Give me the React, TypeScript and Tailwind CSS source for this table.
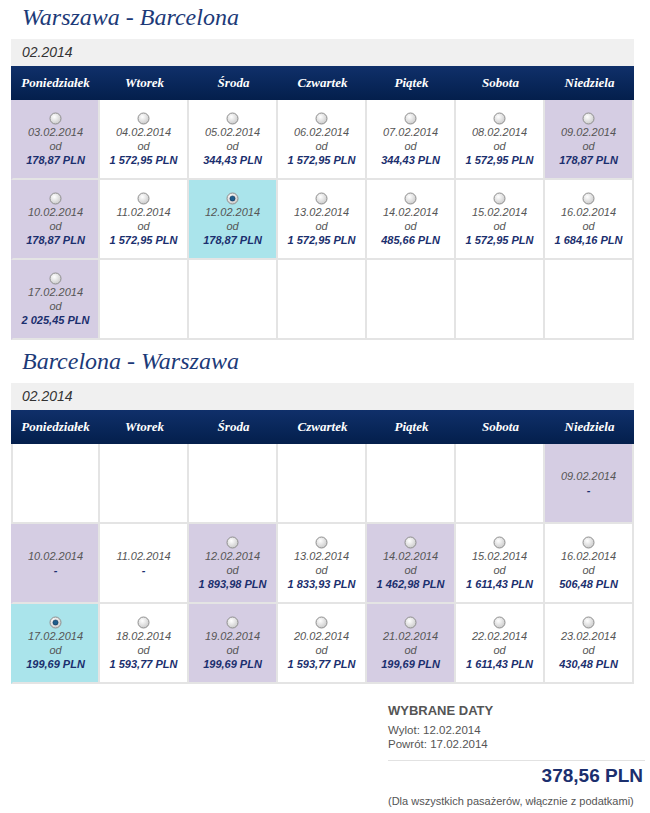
import React from 'react';

type Tone = 'white' | 'purple' | 'cyan';

interface Day {
  date: string;
  price?: string;
  tone?: Tone;
  radio?: boolean;
  selected?: boolean;
}

const days = ['Poniedziałek', 'Wtorek', 'Środa', 'Czwartek', 'Piątek', 'Sobota', 'Niedziela'];

const outbound: (Day | null)[][] = [
  [
    { date: '03.02.2014', price: '178,87 PLN', tone: 'purple', radio: true },
    { date: '04.02.2014', price: '1 572,95 PLN', radio: true },
    { date: '05.02.2014', price: '344,43 PLN', radio: true },
    { date: '06.02.2014', price: '1 572,95 PLN', radio: true },
    { date: '07.02.2014', price: '344,43 PLN', radio: true },
    { date: '08.02.2014', price: '1 572,95 PLN', radio: true },
    { date: '09.02.2014', price: '178,87 PLN', tone: 'purple', radio: true },
  ],
  [
    { date: '10.02.2014', price: '178,87 PLN', tone: 'purple', radio: true },
    { date: '11.02.2014', price: '1 572,95 PLN', radio: true },
    { date: '12.02.2014', price: '178,87 PLN', tone: 'cyan', radio: true, selected: true },
    { date: '13.02.2014', price: '1 572,95 PLN', radio: true },
    { date: '14.02.2014', price: '485,66 PLN', radio: true },
    { date: '15.02.2014', price: '1 572,95 PLN', radio: true },
    { date: '16.02.2014', price: '1 684,16 PLN', radio: true },
  ],
  [
    { date: '17.02.2014', price: '2 025,45 PLN', tone: 'purple', radio: true },
    null, null, null, null, null, null,
  ],
];

const inbound: (Day | null)[][] = [
  [null, null, null, null, null, null, { date: '09.02.2014', tone: 'purple' }],
  [
    { date: '10.02.2014', tone: 'purple' },
    { date: '11.02.2014' },
    { date: '12.02.2014', price: '1 893,98 PLN', tone: 'purple', radio: true },
    { date: '13.02.2014', price: '1 833,93 PLN', radio: true },
    { date: '14.02.2014', price: '1 462,98 PLN', tone: 'purple', radio: true },
    { date: '15.02.2014', price: '1 611,43 PLN', radio: true },
    { date: '16.02.2014', price: '506,48 PLN', radio: true },
  ],
  [
    { date: '17.02.2014', price: '199,69 PLN', tone: 'cyan', radio: true, selected: true },
    { date: '18.02.2014', price: '1 593,77 PLN', radio: true },
    { date: '19.02.2014', price: '199,69 PLN', tone: 'purple', radio: true },
    { date: '20.02.2014', price: '1 593,77 PLN', radio: true },
    { date: '21.02.2014', price: '199,69 PLN', tone: 'purple', radio: true },
    { date: '22.02.2014', price: '1 611,43 PLN', radio: true },
    { date: '23.02.2014', price: '430,48 PLN', radio: true },
  ],
];

const toneBg: Record<Tone, string> = {
  white: 'bg-white border-l-[#e4e4e4]',
  purple: 'bg-[#d5cde3] border-l-[#d5cde3]',
  cyan: 'bg-[#aae4eb] border-l-[#aae4eb]',
};

const Radio = ({ checked }: { checked?: boolean }) => (
  <svg width="13" height="13" viewBox="0 0 13 13" className="mx-auto block">
    <defs>
      <radialGradient id={checked ? 'rg-on' : 'rg-off'} cx="40%" cy="35%" r="70%">
        <stop offset="0%" stopColor="#ffffff" />
        <stop offset="100%" stopColor="#c9c9c9" />
      </radialGradient>
    </defs>
    <circle cx="6.5" cy="6.5" r="5.5" fill={`url(#${checked ? 'rg-on' : 'rg-off'})`} stroke="#8f8f8f" strokeWidth="1" />
    {checked && <circle cx="6.5" cy="6.5" r="2.6" fill="#1f5d8c" stroke="#0d3458" strokeWidth="0.6" />}
  </svg>
);

const Cell = ({ day, first }: { day: Day | null; first: boolean }) => {
  const tone = day?.tone ?? 'white';
  return (
    <div
      className={`h-[80px] border-r-2 border-b-2 border-[#e4e4e4] flex flex-col items-center justify-center ${
        first ? 'border-l-2' : ''
      } ${toneBg[tone]}`}
    >
      {day && (
        <>
          {day.radio && <Radio checked={day.selected} />}
          <div className="text-[11px] leading-[14px] italic text-[#555]">{day.date}</div>
          {day.price ? (
            <>
              <div className="text-[11px] leading-[14px] italic text-[#555]">od</div>
              <div className="text-[11px] leading-[14px] italic font-bold text-[#1b2f6e]">{day.price}</div>
            </>
          ) : (
            <div className="text-[11px] leading-[14px] italic font-bold text-[#1b2f6e]">-</div>
          )}
        </>
      )}
    </div>
  );
};

const Calendar = ({ title, rows, className }: { title: string; rows: (Day | null)[][]; className?: string }) => (
  <section className={className}>
    <div className="h-[39px] pl-[11px] pt-[2px]">
      <h1 className="text-[24px] leading-[30px] italic text-[#1c3a78] font-['Liberation_Serif',serif]">{title}</h1>
    </div>
    <div className="h-[27px] bg-[#f0f0f0] pl-[11px] flex items-center">
      <span className="text-[14px] italic text-[#333]">02.2014</span>
    </div>
    <div className="grid grid-cols-7 h-[34px] bg-linear-to-b from-[#10306a] to-[#041f4c]">
      {days.map((d) => (
        <div
          key={d}
          className="flex items-center justify-center text-white text-[13px] font-bold italic font-['Liberation_Serif',serif]"
        >
          {d}
        </div>
      ))}
    </div>
    <div className="grid grid-cols-7">
      {rows.flatMap((row, r) =>
        row.map((day, c) => <Cell key={`${r}-${c}`} day={day} first={c === 0} />)
      )}
    </div>
  </section>
);

export default function App() {
  return (
    <div className="w-[650px] min-h-[813px] bg-white font-['Liberation_Sans',Arial,sans-serif]">
      <div className="pl-[11px] w-[634px]">
        <Calendar title="Warszawa - Barcelona" rows={outbound} />
        <Calendar title="Barcelona - Warszawa" rows={inbound} className="mt-[4px]" />
      </div>
      <div className="ml-[388px] w-[257px] mt-[19px]">
        <div className="text-[13px] leading-[15px] font-bold text-[#555]">WYBRANE DATY</div>
        <div className="mt-[5px] text-[11.5px] leading-[14px] text-[#555]">Wylot: 12.02.2014</div>
        <div className="text-[11.5px] leading-[14px] text-[#555]">Powrót: 17.02.2014</div>
        <div className="mt-[9px] border-t border-[#e2e2e2] pr-[2px]">
          <div className="pt-[3px] text-right text-[19px] leading-[24px] font-bold text-[#1b2f6e]">378,56 PLN</div>
          <div className="mt-[6px] text-[11px] leading-[14px] text-[#555]">
            (Dla wszystkich pasażerów, włącznie z podatkami)
          </div>
        </div>
      </div>
    </div>
  );
}
